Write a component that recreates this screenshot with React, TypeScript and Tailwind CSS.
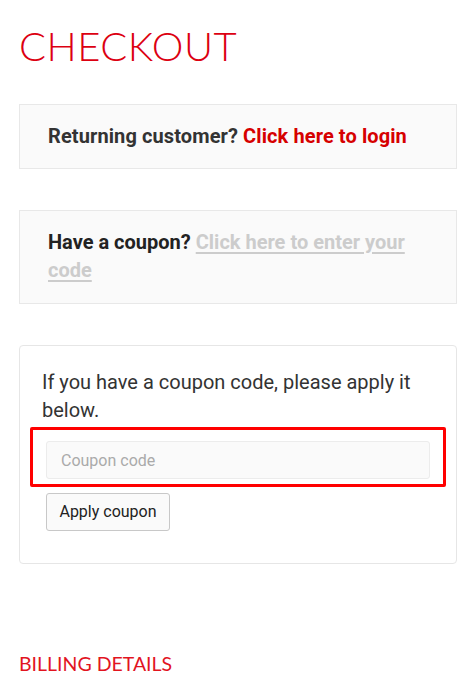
import React from 'react';

const App: React.FC = () => {
  return (
    <div className="min-h-screen bg-white pb-10" style={{ fontFamily: 'Roboto, "Liberation Sans", sans-serif' }}>
      <div className="ml-[19px] w-[438px]">
        <h1 className="pt-[24px] text-[40px] leading-[44px] font-light text-[#dc0011] tracking-[0.5px]" style={{ fontFamily: 'Lato, sans-serif' }}>
          CHECKOUT
        </h1>

        {/* Returning customer */}
        <div className="mt-[36px] border border-[#e8e8e8] bg-[#fafafa] px-[28px] pt-[17px] pb-[18px]">
          <p className="text-[20px] leading-[28px] font-bold text-[#333] tracking-[0.1px]">
            Returning customer? <a href="#" className="text-[#d60000]">Click here to login</a>
          </p>
        </div>

        {/* Coupon toggle */}
        <div className="mt-[41px] border border-[#e8e8e8] bg-[#fafafa] pl-[28px] pr-[40px] pt-[17px] pb-[19px]">
          <p className="text-[20px] leading-[28px] font-bold text-[#222]">
            Have a coupon? <a href="#" className="text-[#cccccc] underline underline-offset-[3px]">Click here to enter your code</a>
          </p>
        </div>

        {/* Coupon form */}
        <div className="mt-[41px] rounded-[4px] border border-[#e6e6e6] bg-white pl-[22px] pr-[22px] pt-[22px] pb-[32px]">
          <p className="text-[20px] leading-[28px] text-[#333] pr-[2px]">
            If you have a coupon code, please apply it below.
          </p>
          <div className="relative mt-[17px] ml-[4px] mr-[4px]">
            <input
              type="text"
              placeholder="Coupon code"
              className="block h-[38px] w-full rounded-[3px] border border-[#ececec] bg-[#fafafa] px-[14px] text-[16px] text-[#333] placeholder:text-[#aaa] outline-none"
            />
            <div className="pointer-events-none absolute left-[-16px] right-[-16px] top-[-14px] bottom-[-8px] border-[3px] border-[#ff0000] rounded-[2px]" />
          </div>
          <button className="mt-[14px] ml-[4px] h-[38px] w-[124px] rounded-[3px] border border-[#c8c8c8] bg-[#fafafa] text-[16px] text-[#222]">
            Apply coupon
          </button>
        </div>

        <h3 className="mt-[88px] text-[19.5px] leading-[24px] text-[#e2141f] uppercase" style={{ fontFamily: 'Lato, sans-serif' }}>
          Billing Details
        </h3>
      </div>
    </div>
  );
};

export default App;
